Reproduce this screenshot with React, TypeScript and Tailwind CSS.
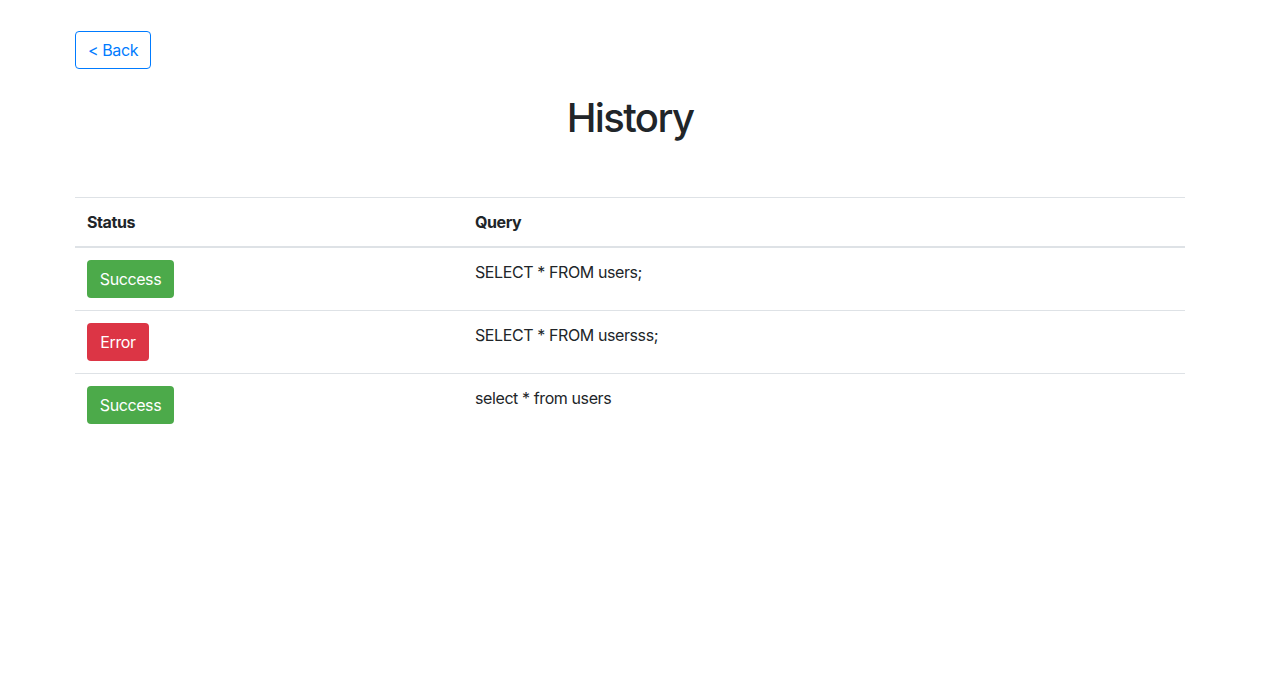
const ROWS: { ok: boolean; query: string }[] = [
  { ok: true, query: 'SELECT * FROM users;' },
  { ok: false, query: 'SELECT * FROM usersss;' },
  { ok: true, query: 'select * from users' },
]

export default function App() {
  return (
    <div className="min-h-screen bg-white tracking-[-0.025em] text-[#212529]" style={{ fontFamily: 'Inter, "Helvetica Neue", Arial, sans-serif' }}>
      <div className="ml-[75px] w-[1110px] pt-[31px]">
        <button className="h-[38px] w-[76px] rounded border border-[#007bff] text-base leading-6 text-[#007bff]">&lt; Back</button>
        <h1 className="mt-[25px] text-center text-[40px] font-medium leading-[48px] tracking-[-0.04em]">History</h1>
        <table className="mt-[55px] w-full border-collapse text-left text-base">
          <thead>
            <tr className="border-t border-[#dee2e6]">
              <th className="w-[388px] border-b-2 border-[#dee2e6] p-3 align-bottom font-bold leading-6">Status</th>
              <th className="border-b-2 border-[#dee2e6] p-3 align-bottom font-bold leading-6">Query</th>
            </tr>
          </thead>
          <tbody>
            {ROWS.map((r, i) => (
              <tr key={i} className="border-t border-[#dee2e6]">
                <td className="p-3 align-top">
                  <span className={`inline-block h-[38px] rounded text-center leading-[38px] text-white ${r.ok ? 'w-[87px] bg-[#4caa4a]' : 'w-[62px] bg-[#dc3545]'}`}>
                    {r.ok ? 'Success' : 'Error'}
                  </span>
                </td>
                <td className="p-3 align-top leading-6">{r.query}</td>
              </tr>
            ))}
          </tbody>
        </table>
      </div>
    </div>
  )
}
